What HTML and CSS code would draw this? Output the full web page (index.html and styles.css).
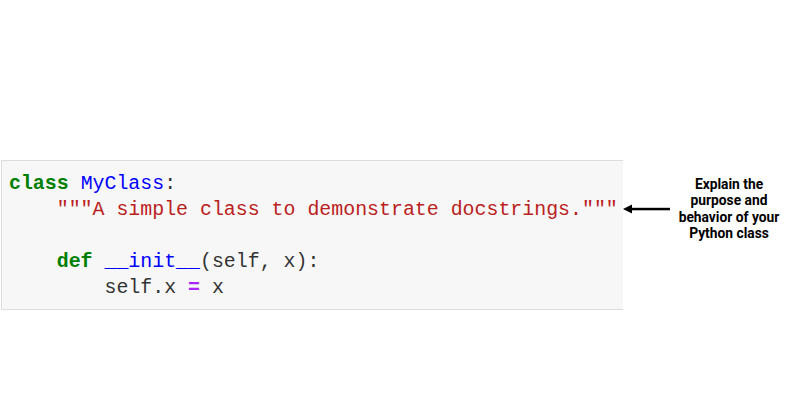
FILE: index.html
```html
<!DOCTYPE html>
<html>
<head>
<meta charset="utf-8">
<link rel="stylesheet" href="styles.css">
</head>
<body>
<div class="page">
  <div class="row">
    <pre class="code"><span class="kw">class</span> <span class="nm">MyClass</span>:
    <span class="st">"""A simple class to demonstrate docstrings."""</span>

    <span class="kw">def</span> <span class="nm">__init__</span>(self, x):
        self.x <span class="op">=</span> x</pre>
    <div class="note">
      <svg class="arrow" width="47" height="12" viewBox="0 0 47 12">
        <polygon points="0,6 9,1.5 9,10.5" fill="#000"/>
        <rect x="7" y="4.8" width="40" height="2.5" fill="#000"/>
      </svg>
      <div class="label">Explain the<br>purpose and<br>behavior of your<br>Python class</div>
    </div>
  </div>
</div>
</body>
</html>
```
FILE: styles.css
```css
html, body {
  margin: 0;
  padding: 0;
  background: #fff;
}
.page {
  width: 800px;
  height: 420px;
  padding-top: 160px;
  box-sizing: border-box;
}
.row {
  display: flex;
  align-items: flex-start;
  margin-left: 1px;
}
.code {
  margin: 0;
  width: 622px;
  box-sizing: border-box;
  height: 150px;
  padding: 10px 0 0 7px;
  background: #f7f7f7;
  border: 1px solid #dcdcdc;
  border-right: none;
  font-family: "Liberation Mono", "DejaVu Sans Mono", monospace;
  font-size: 19.9px;
  line-height: 26px;
  color: #333;
}
.kw { color: #008000; font-weight: bold; }
.nm { color: #0000ff; }
.st { color: #ba2121; }
.op { color: #aa22ff; font-weight: bold; }
.note {
  display: flex;
  align-items: center;
  margin-top: 16px;
}
.arrow {
  display: block;
  width: 47px;
  flex: none;
}
.label {
  width: 118px;
  text-align: center;
  font-family: Roboto, "Liberation Sans", sans-serif;
  font-weight: bold;
  font-size: 13.8px;
  line-height: 16.4px;
  color: #000;
}
```
